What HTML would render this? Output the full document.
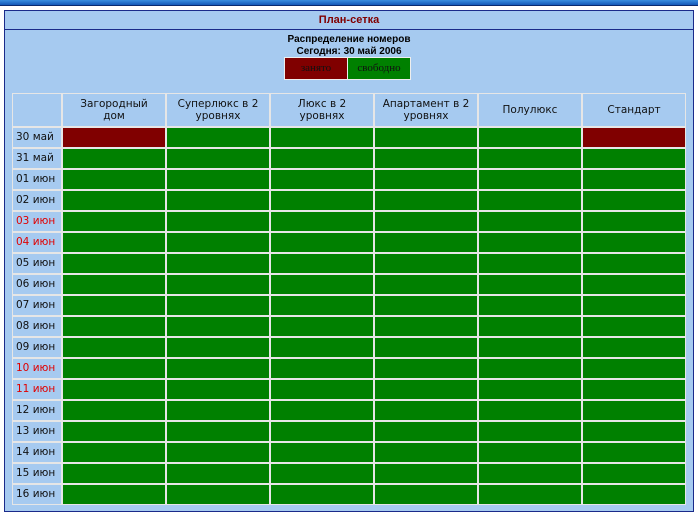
<!DOCTYPE html>
<html><head><meta charset="utf-8"><style>
body{margin:0;width:698px;height:500px;overflow:hidden;background:#fff;font-family:"Liberation Sans","DejaVu Sans",sans-serif;position:relative}
.top{position:absolute;left:0;top:0;width:698px;height:5px;background:linear-gradient(#3a8ee0,#1458b8);border-bottom:1px solid #0a2a70}
.panel{position:absolute;left:4px;top:10px;width:688px;height:500px;background:#a6caf0;border:1px solid #1a2a8a}
.title{height:18px;border-bottom:1px solid #1a2a8a;text-align:center;font-size:11px;font-weight:bold;color:#800000;line-height:18px}
.sub{text-align:center;font-size:10px;font-weight:bold;color:#000;line-height:12px;margin-top:4px}
.leg{position:absolute;left:284px;top:57px;display:flex;gap:1px;background:#eee;padding:1px}
.leg div{width:62px;height:21px;font-family:"Liberation Serif",serif;font-size:11px;line-height:21px;text-align:center;color:#111}
.grid{position:absolute;left:12px;top:93px;background:#e6e6e6;padding:1px;display:grid;grid-template-columns:48px repeat(6,102px);grid-auto-rows:19px;grid-template-rows:32px;gap:2px}
.grid div{color:#111;font-family:"DejaVu Sans",sans-serif;font-size:10.5px}
.h{background:#a6caf0;text-align:center;display:flex;align-items:center;justify-content:center;line-height:12px}
.d{background:#a6caf0;padding-left:3px;line-height:19px}
.r{color:#e00000!important}
.g{background:#008000}.m{background:#800000}
</style></head><body>
<div class="top"></div>
<div class="panel">
<div class="title">План-сетка</div>
<div class="sub">Распределение номеров<br>Сегодня: 30 май 2006</div>
</div>
<div class="leg"><div style="background:#800000">занято</div><div style="background:#008000">свободно</div></div>
<div class="grid">
<div class="h"></div><div class="h">Загородный<br>дом</div><div class="h">Суперлюкс в 2<br>уровнях</div><div class="h">Люкс в 2<br>уровнях</div><div class="h">Апартамент в 2<br>уровнях</div><div class="h">Полулюкс</div><div class="h">Стандарт</div>
<div class="d">30 май</div><div class="m"></div><div class="g"></div><div class="g"></div><div class="g"></div><div class="g"></div><div class="m"></div>
<div class="d">31 май</div><div class="g"></div><div class="g"></div><div class="g"></div><div class="g"></div><div class="g"></div><div class="g"></div>
<div class="d">01 июн</div><div class="g"></div><div class="g"></div><div class="g"></div><div class="g"></div><div class="g"></div><div class="g"></div>
<div class="d">02 июн</div><div class="g"></div><div class="g"></div><div class="g"></div><div class="g"></div><div class="g"></div><div class="g"></div>
<div class="d r">03 июн</div><div class="g"></div><div class="g"></div><div class="g"></div><div class="g"></div><div class="g"></div><div class="g"></div>
<div class="d r">04 июн</div><div class="g"></div><div class="g"></div><div class="g"></div><div class="g"></div><div class="g"></div><div class="g"></div>
<div class="d">05 июн</div><div class="g"></div><div class="g"></div><div class="g"></div><div class="g"></div><div class="g"></div><div class="g"></div>
<div class="d">06 июн</div><div class="g"></div><div class="g"></div><div class="g"></div><div class="g"></div><div class="g"></div><div class="g"></div>
<div class="d">07 июн</div><div class="g"></div><div class="g"></div><div class="g"></div><div class="g"></div><div class="g"></div><div class="g"></div>
<div class="d">08 июн</div><div class="g"></div><div class="g"></div><div class="g"></div><div class="g"></div><div class="g"></div><div class="g"></div>
<div class="d">09 июн</div><div class="g"></div><div class="g"></div><div class="g"></div><div class="g"></div><div class="g"></div><div class="g"></div>
<div class="d r">10 июн</div><div class="g"></div><div class="g"></div><div class="g"></div><div class="g"></div><div class="g"></div><div class="g"></div>
<div class="d r">11 июн</div><div class="g"></div><div class="g"></div><div class="g"></div><div class="g"></div><div class="g"></div><div class="g"></div>
<div class="d">12 июн</div><div class="g"></div><div class="g"></div><div class="g"></div><div class="g"></div><div class="g"></div><div class="g"></div>
<div class="d">13 июн</div><div class="g"></div><div class="g"></div><div class="g"></div><div class="g"></div><div class="g"></div><div class="g"></div>
<div class="d">14 июн</div><div class="g"></div><div class="g"></div><div class="g"></div><div class="g"></div><div class="g"></div><div class="g"></div>
<div class="d">15 июн</div><div class="g"></div><div class="g"></div><div class="g"></div><div class="g"></div><div class="g"></div><div class="g"></div>
<div class="d">16 июн</div><div class="g"></div><div class="g"></div><div class="g"></div><div class="g"></div><div class="g"></div><div class="g"></div>
</div>
</body></html>
